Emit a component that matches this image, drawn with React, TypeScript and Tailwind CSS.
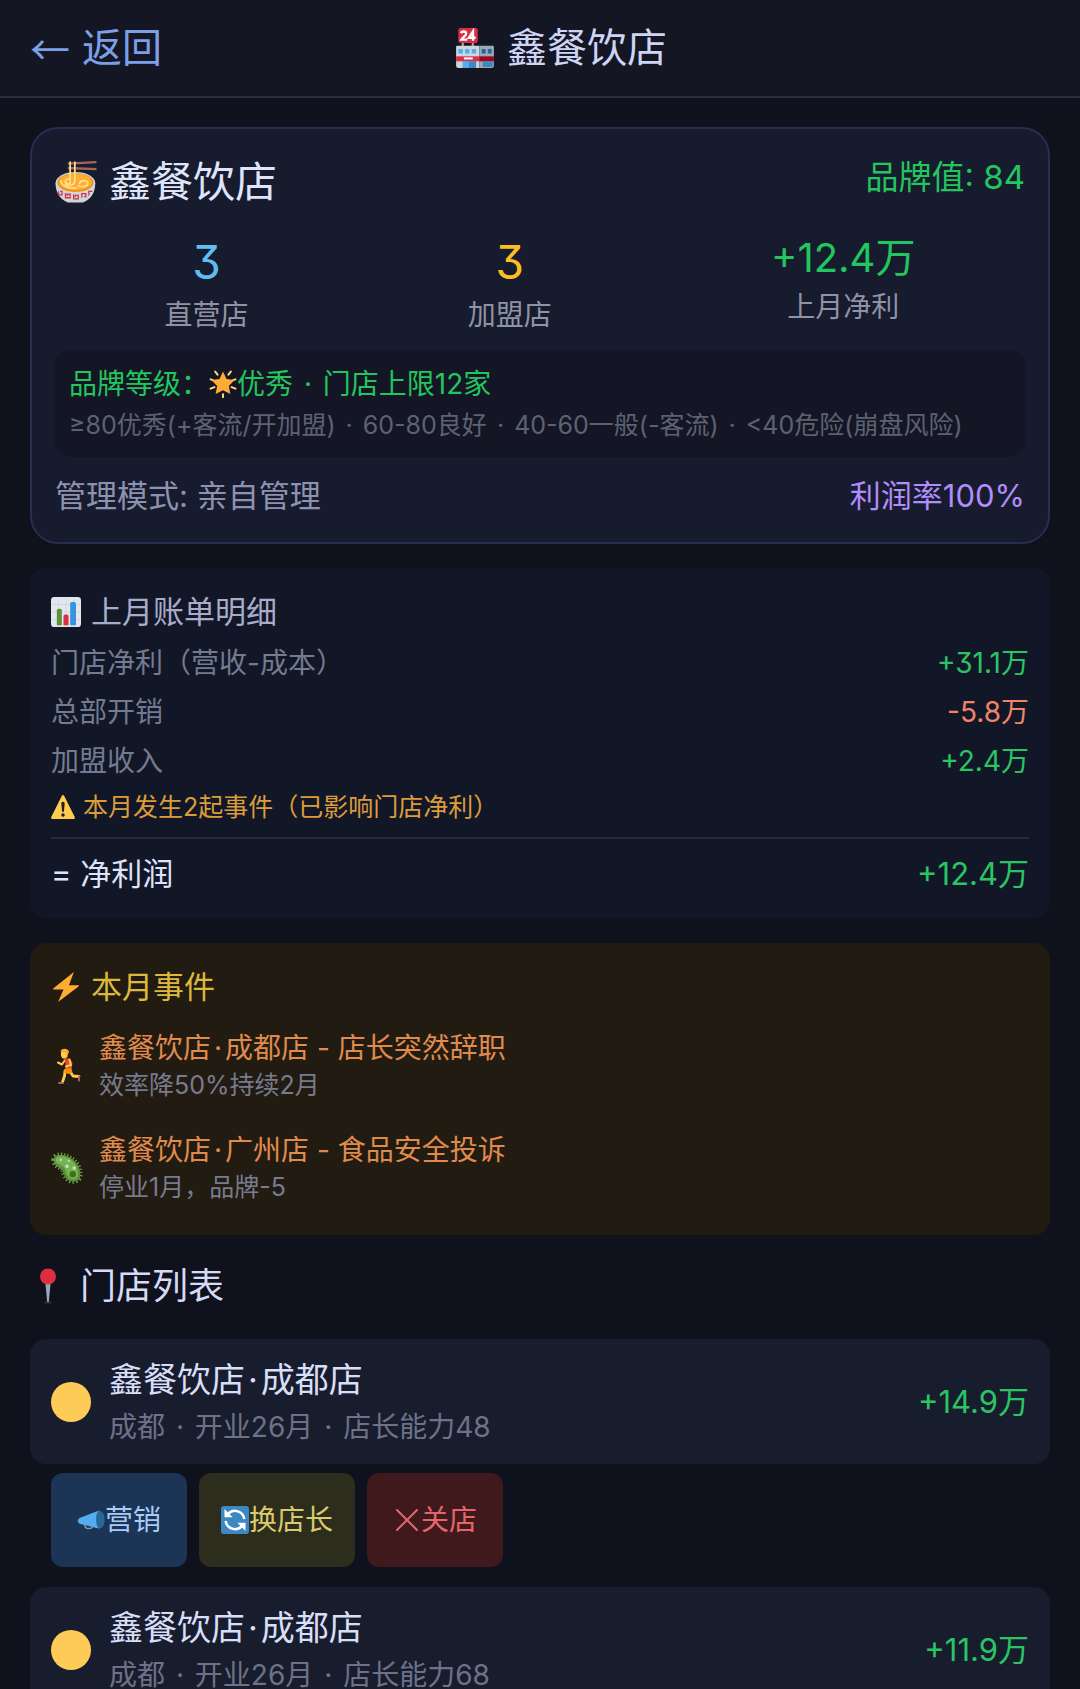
import type { ReactNode } from 'react';

type Bill = { label: string; value: string; negative?: boolean };
type StoreEvent = { icon: ReactNode; title: string; detail: string };
type Store = { name: string; info: string; profit: string; showActions: boolean };

function ShopIcon() {
  return (
    <svg viewBox="0 0 36 36" className="size-10 shrink-0" aria-hidden="true">
      <path fill="#99aab5" d="M6 12h2v5H6zM15 12h2v5h-2z" />
      <path fill="#ccd6dd" d="M1 17a1 1 0 0 1 1-1h20v20H3a2 2 0 0 1-2-2z" />
      <path fill="#99aab5" d="M22 16h12a1 1 0 0 1 1 1v17a2 2 0 0 1-2 2H22z" />
      <path fill="#55acee" d="M3 19h4v4H3zM9 19h4v4H9zM15 19h4v4h-4z" />
      <path fill="#226699" d="M24 19h3.500v4H24zM29.500 19H33v4h-3.500z" />
      <path fill="#dd2e44" d="M1 25.500h21v4.500H1z" />
      <path fill="#a0041e" d="M22 25.500h13v4.500H22z" />
      <path fill="#fff" d="M8 26.500h8v1.800H8z" />
      <path fill="#3b88c3" d="M7 30h12v6H7zM25 30h9v4a1 1 0 0 1-1 1h-8z" />
      <path fill="#55acee" d="M7 30h5.500v6H7z" />
      <rect x="3" y="0" width="17.500" height="13.500" rx="2" fill="#dd2e44" />
      <g fill="none" stroke="#fff" strokeWidth="2.100">
        <path d="M5.500 4.800C6 2.500 10 2.500 10 5.200c0 2-3 3-4.300 5.300H11" />
        <path d="M16.200 11.500V3L12.500 8.800H18.500" />
      </g>
    </svg>
  );
}

function NoodlesIcon() {
  return (
    <svg viewBox="0 0 36 36" className="size-[42px] shrink-0" aria-hidden="true">
      <path stroke="#a5655c" strokeWidth="2" d="M11 2.300 35.500 1M11 6 35.500 7" />
      <ellipse cx="17.500" cy="19" rx="17" ry="9.500" fill="#ccd6dd" />
      <path fill="#ccd6dd" d="M.500 19c0 9 4.500 14 10.500 16.500h13C30 33 34.500 28 34.500 19z" />
      <ellipse cx="17.500" cy="18.500" rx="15.500" ry="8" fill="#f4900c" />
      <ellipse cx="17.500" cy="18" rx="14" ry="7" fill="#ffac33" />
      <g fill="none" stroke="#ffe08a" strokeWidth="1.500" strokeLinecap="round">
        <path d="M13 1v17c0 2-3 2-4 .500s1-3.500 4-3.500M17 1v16c0 4-5 5-8 3M5 17c1 5 7 7 13 6M21 19c1-3 7-3 7 0s-5 4-8 2" />
      </g>
      <path
        fill="none"
        stroke="#dd2e44"
        strokeWidth="1.100"
        d="M3 26v3h3v-3H4.500M9 27.500v4h4v-3h-2.500v1.500M16 28.500v4h4v-3h-2.500v1.500M23 31.500v-3.500h3.500v2.500H25M29 29.500V26h3"
      />
    </svg>
  );
}

function StarIcon() {
  return (
    <svg viewBox="0 0 36 36" className="size-7 shrink-0" aria-hidden="true">
      <path stroke="#ffd983" strokeWidth="2.500" strokeLinecap="round" d="m8 2 3 4M28 2l-3 4M2 24l5-2M34 24l-5-2M18 31v4M31 13l3-1M5 13l-3-1" />
      <path fill="#ffac33" d="m18 2 4.500 9.500L33 13l-7.500 7.500L27.500 31 18 26 8.500 31l2-10.500L3 13l10.500-1.500z" />
    </svg>
  );
}

function ChartIcon() {
  return (
    <svg viewBox="0 0 36 36" className="size-[30px] shrink-0" aria-hidden="true">
      <rect width="36" height="36" rx="4" fill="#e1e8ed" />
      <path stroke="#ccd6dd" d="M1 9h34M1 18h34M1 27h34M9 1v34M18 1v34M27 1v34" />
      <path fill="#5c913b" d="M7 16a2 2 0 0 1 2-2h2a2 2 0 0 1 2 2v18H7z" />
      <path fill="#dd2e44" d="M15 23a2 2 0 0 1 2-2h2a2 2 0 0 1 2 2v11h-6z" />
      <path fill="#3b94d9" d="M23 8a2 2 0 0 1 2-2h3a2 2 0 0 1 2 2v26h-7z" />
    </svg>
  );
}

function WarningIcon() {
  return (
    <svg viewBox="0 0 36 36" className="size-6 shrink-0" aria-hidden="true">
      <path fill="#ffcc4d" d="M2.700 36c-2.200 0-3.200-1.500-2.100-3.500L16.100 1.500c1-2 2.700-2 3.800 0l15.500 31c1.100 2 .100 3.500-2.100 3.500z" />
      <path fill="#231f20" d="M15.500 12.500a2.500 2.500 0 0 1 5 0L19.500 24a1.500 1.500 0 0 1-3 0z" />
      <circle cx="18" cy="30" r="2.600" fill="#231f20" />
    </svg>
  );
}

function BoltIcon() {
  return (
    <svg viewBox="0 0 36 36" className="size-[30px] shrink-0" aria-hidden="true">
      <path fill="#ffac33" d="M27.500 0 3 19.500c-.800.700-.500 1.500.500 1.500H15L8.500 36 33 17.500c1-.800.600-1.500-.500-1.500H21.500z" />
    </svg>
  );
}

function RunnerIcon() {
  return (
    <svg viewBox="0 0 32 36" className="h-9 w-8 shrink-0" aria-hidden="true">
      <g fill="none" stroke="#ffcc4d" strokeLinecap="round" strokeLinejoin="round">
        <path strokeWidth="2" d="m14 12-3 4.500-4-2" />
        <path strokeWidth="2.800" d="m18 22 4 6 6 .500M14 23l-.500 5-2 6" />
      </g>
      <path fill="#dd4b2a" d="m13.500 10.500 5.500-.500 2.500 5-1 7.500-6.500.500.500-6z" />
      <path fill="#f4900c" d="m13.500 21 6.500-1 1.500 4.500-3 1.500-5-1z" />
      <path fill="none" stroke="#ffcc4d" strokeWidth="2" strokeLinecap="round" strokeLinejoin="round" d="m18.500 12 1.500 5-5 1.500" />
      <path fill="#ffcc4d" d="M10 3.500h6.500V9L14 10.500h-2.500L10 8z" />
      <path fill="#ffac33" d="M9.500 3.500C9.500 0 17.500-.500 18 4l-2 4-1.500-3.500z" />
      <path stroke="#a5655c" strokeWidth="2" strokeLinecap="round" d="M28 28.500v4M8 35h4" />
    </svg>
  );
}

function MicrobeIcon() {
  return (
    <svg viewBox="0 0 36 36" className="h-9 w-8 shrink-0" aria-hidden="true">
      <path
        fill="none"
        stroke="#77b255"
        strokeWidth="7"
        strokeDasharray="1.100 2.200"
        d="M4 9c0-5 6-6 12-4s13 7 15 14 1 12-4 13-9-2-11-6-1-6-4-8-8-4-8-9z"
      />
      <path fill="#5c913b" d="M3 9c0-6 7-7 13-5s14 7 16 15 1 13-5 14-10-2-12-7-1-5-4-7-8-4-8-10z" />
      <path fill="#77b255" d="M5 9c0-4 5-5 10.500-3.500S28 12 29.500 19s1 10.500-3 11.500-7-2-9-7-2-6-5-8S5 13 5 9z" />
      <circle cx="24.500" cy="25" r="3.600" fill="#3e721d" />
      <g fill="#c6e5b3">
        <circle cx="11" cy="9" r="1.300" />
        <circle cx="18" cy="16" r="1.900" />
        <circle cx="26" cy="18" r="1.900" />
        <circle cx="20" cy="10" r="1.200" />
      </g>
    </svg>
  );
}

function PinIcon() {
  return (
    <svg viewBox="0 0 36 36" className="size-9 shrink-0" aria-hidden="true">
      <ellipse cx="18" cy="34.500" rx="4" ry="1.300" fill="#292f33" />
      <path fill="#99aab5" d="M15.300 14h5.400L18.800 34h-1.600z" />
      <circle cx="18" cy="8.500" r="8" fill="#dd2e44" />
    </svg>
  );
}

function MegaphoneIcon() {
  return (
    <svg viewBox="0 0 36 36" className="size-7 shrink-0" aria-hidden="true">
      <path fill="none" stroke="#8899a6" strokeWidth="1.800" d="M10 24c0 4 2 5 5 5s5-1 5-3" />
      <path fill="#55acee" d="M28 6 4 15c-4 2-4 6 0 8l24 6z" />
      <ellipse cx="29" cy="17.500" rx="6.500" ry="11.500" fill="#2a6797" />
      <path fill="#55acee" d="M29 6c-6 2-6 21 0 23L18 26V10z" />
    </svg>
  );
}

function SwapIcon() {
  return (
    <svg viewBox="0 0 36 36" className="size-7 shrink-0" aria-hidden="true">
      <rect width="36" height="36" rx="4" fill="#3b88c3" />
      <g fill="none" stroke="#fff" strokeWidth="3.200">
        <path d="M9 10.500A12 12 0 0 1 30 17M27 25.500A12 12 0 0 1 6 19" />
      </g>
      <path fill="#fff" d="M4.500 4v10.500H15zM31.500 32V21.500H21z" />
    </svg>
  );
}

function CloseIcon() {
  return (
    <svg viewBox="0 0 28 28" className="size-7 shrink-0" aria-hidden="true">
      <path stroke="currentColor" strokeWidth="2" strokeLinecap="round" d="m4 4 20 20M24 4 4 24" />
    </svg>
  );
}

function Dotted({ text }: { text: string }) {
  return (
    <>
      {text.split('·').map((part, i) => (
        <span key={i}>
          {i > 0 && <span className="px-[3px]">·</span>}
          {part}
        </span>
      ))}
    </>
  );
}

const bills: Bill[] = [
  { label: '门店净利（营收-成本）', value: '+31.1万' },
  { label: '总部开销', value: '-5.8万', negative: true },
  { label: '加盟收入', value: '+2.4万' },
];

const events: StoreEvent[] = [
  { icon: <RunnerIcon />, title: '鑫餐饮店·成都店 - 店长突然辞职', detail: '效率降50%持续2月' },
  { icon: <MicrobeIcon />, title: '鑫餐饮店·广州店 - 食品安全投诉', detail: '停业1月，品牌-5' },
];

const stores: Store[] = [
  { name: '鑫餐饮店·成都店', info: '成都 · 开业26月 · 店长能力48', profit: '+14.9万', showActions: true },
  { name: '鑫餐饮店·成都店', info: '成都 · 开业26月 · 店长能力68', profit: '+11.9万', showActions: false },
];

function Header() {
  return (
    <header className="flex h-[98px] shrink-0 items-center justify-between border-b-2 border-[#2a2c40] bg-[#141623] px-[30px] text-[40px] leading-[56px]">
      <button type="button" className="flex items-center gap-3 text-[#7c9fe8]">
        <span className="font-['Noto_Sans_CJK_SC',sans-serif] leading-[50px]">←</span>
        返回
      </button>
      <h1 className="flex items-center gap-3 text-[#ced4f4]">
        <ShopIcon />
        鑫餐饮店
      </h1>
      <div className="w-[90px]" />
    </header>
  );
}

function BrandCard() {
  return (
    <section className="rounded-[28px] border-2 border-[#262f4f] bg-[#171b2e] px-[23px] py-[25px]">
      <div className="flex items-start justify-between">
        <h2 className="flex items-center gap-3 text-[42px] leading-[56px] text-[#dfe4fb]">
          <NoodlesIcon />
          鑫餐饮店
        </h2>
        <span className="text-[33px] leading-[46px] text-[#22c55e]">品牌值: 84</span>
      </div>

      <div className="mt-5 flex justify-around text-center text-[28px] leading-[38px] text-[#8f93a5]">
        <div className="flex flex-col gap-0.5">
          <span className="text-[46px] leading-[64px] text-[#5fbdf5]">3</span>
          <span>直营店</span>
        </div>
        <div className="flex flex-col gap-0.5">
          <span className="text-[46px] leading-[64px] text-[#fbbf24]">3</span>
          <span>加盟店</span>
        </div>
        <div className="flex flex-col gap-0.5">
          <span className="text-[40px] leading-[56px] text-[#22c55e]">+12.4万</span>
          <span>上月净利</span>
        </div>
      </div>

      <div className="mt-4 flex flex-col gap-[5px] rounded-2xl bg-[#141625] px-3.5 py-[15px]">
        <p className="flex items-center text-[28px] leading-[38px] text-[#22c55e]">
          品牌等级：
          <StarIcon />
          <span>
            <Dotted text="优秀 · 门店上限12家" />
          </span>
        </p>
        <p className="text-[25px] leading-[34px] text-[#5d6273]">
          <Dotted text="≥80优秀(+客流/开加盟) · 60-80良好 · 40-60一般(-客流) · <40危险(崩盘风险)" />
        </p>
      </div>

      <div className="mt-[18px] flex justify-between text-[31px] leading-[42px]">
        <span className="text-[#8d92b0]">管理模式: 亲自管理</span>
        <span className="text-[#b18cfa]">利润率100%</span>
      </div>
    </section>
  );
}

function BillCard() {
  return (
    <section className="mt-6 rounded-2xl bg-[#121727] px-[21px] py-[23px]">
      <h2 className="mb-1.5 flex items-center gap-2.5 text-[31px] leading-[42px] text-[#a8acca]">
        <ChartIcon />
        上月账单明细
      </h2>
      {bills.map((bill) => (
        <div key={bill.label} className="flex justify-between text-[28px] leading-[49px]">
          <span className="text-[#737b90]">{bill.label}</span>
          <span className={bill.negative ? 'text-[#f08468]' : 'text-[#2bc465]'}>{bill.value}</span>
        </div>
      ))}
      <p className="mt-1 flex items-center gap-2 text-[25px] leading-[34px] text-[#dd9c3a]">
        <WarningIcon />
        本月发生2起事件（已影响门店净利）
      </p>
      <div className="mt-[13px] flex justify-between border-t-2 border-[#262a3a] pt-3.5 text-[31px] leading-[42px]">
        <span className="text-[#dfe3fa]">= 净利润</span>
        <span className="text-[#2bc465]">+12.4万</span>
      </div>
    </section>
  );
}

function EventCard() {
  return (
    <section className="mt-[25px] rounded-2xl bg-[#221b11] px-[21px] pt-[23px] pb-4">
      <h2 className="mb-[7px] flex items-center gap-2.5 text-[31px] leading-[42px] text-[#dcb93c]">
        <BoltIcon />
        本月事件
      </h2>
      {events.map((event) => (
        <div key={event.title} className="flex items-center gap-4 py-3.5">
          {event.icon}
          <div className="flex flex-col">
            <span className="text-[28px] leading-[38px] text-[#e08b4e]">
              <Dotted text={event.title} />
            </span>
            <span className="text-[25px] leading-9 text-[#777b8e]">{event.detail}</span>
          </div>
        </div>
      ))}
    </section>
  );
}

function StoreItem({ store }: { store: Store }) {
  return (
    <li className="mb-5">
      <div className="flex items-center rounded-2xl bg-[#181d2d] px-[21px] py-[18px]">
        <span className="size-10 shrink-0 rounded-full bg-[#ffcb57]" />
        <div className="ml-[18px] flex flex-1 flex-col gap-[5px]">
          <span className="text-[34px] leading-[46px] text-[#d8def8]">
            <Dotted text={store.name} />
          </span>
          <span className="text-[28px] leading-[38px] text-[#6d7288]">
            <Dotted text={store.info} />
          </span>
        </div>
        <span className="text-[31px] leading-[42px] text-[#2bc465]">{store.profit}</span>
      </div>
      {store.showActions && (
        <div className="mt-[9px] flex gap-3 px-[21px] text-[28px] leading-[38px]">
          <button type="button" className="flex min-w-[136px] items-center justify-center rounded-xl bg-[#1c3557] px-[22px] py-7 text-[#a8ccfa]">
            <MegaphoneIcon />
            营销
          </button>
          <button type="button" className="flex min-w-[136px] items-center justify-center rounded-xl bg-[#2d2d1e] px-[22px] py-7 text-[#dccb6c]">
            <SwapIcon />
            换店长
          </button>
          <button type="button" className="flex min-w-[136px] items-center justify-center rounded-xl bg-[#40191c] px-[22px] py-7 text-[#e5666a]">
            <CloseIcon />
            关店
          </button>
        </div>
      )}
    </li>
  );
}

export default function App() {
  return (
    <div className="flex h-screen flex-col bg-[#0f111d] font-['Inter','Noto_Sans_CJK_SC',sans-serif] font-normal [font-feature-settings:'cv09']">
      <Header />
      <main className="flex-1 overflow-y-auto px-[30px] pt-[29px] [scrollbar-width:none]">
        <BrandCard />
        <BillCard />
        <EventCard />
        <h2 className="mt-[26px] mb-7 flex items-center gap-3.5 text-[36px] leading-[50px] text-[#d5daf5]">
          <PinIcon />
          门店列表
        </h2>
        <ul>
          {stores.map((store, i) => (
            <StoreItem key={i} store={store} />
          ))}
        </ul>
      </main>
    </div>
  );
}
